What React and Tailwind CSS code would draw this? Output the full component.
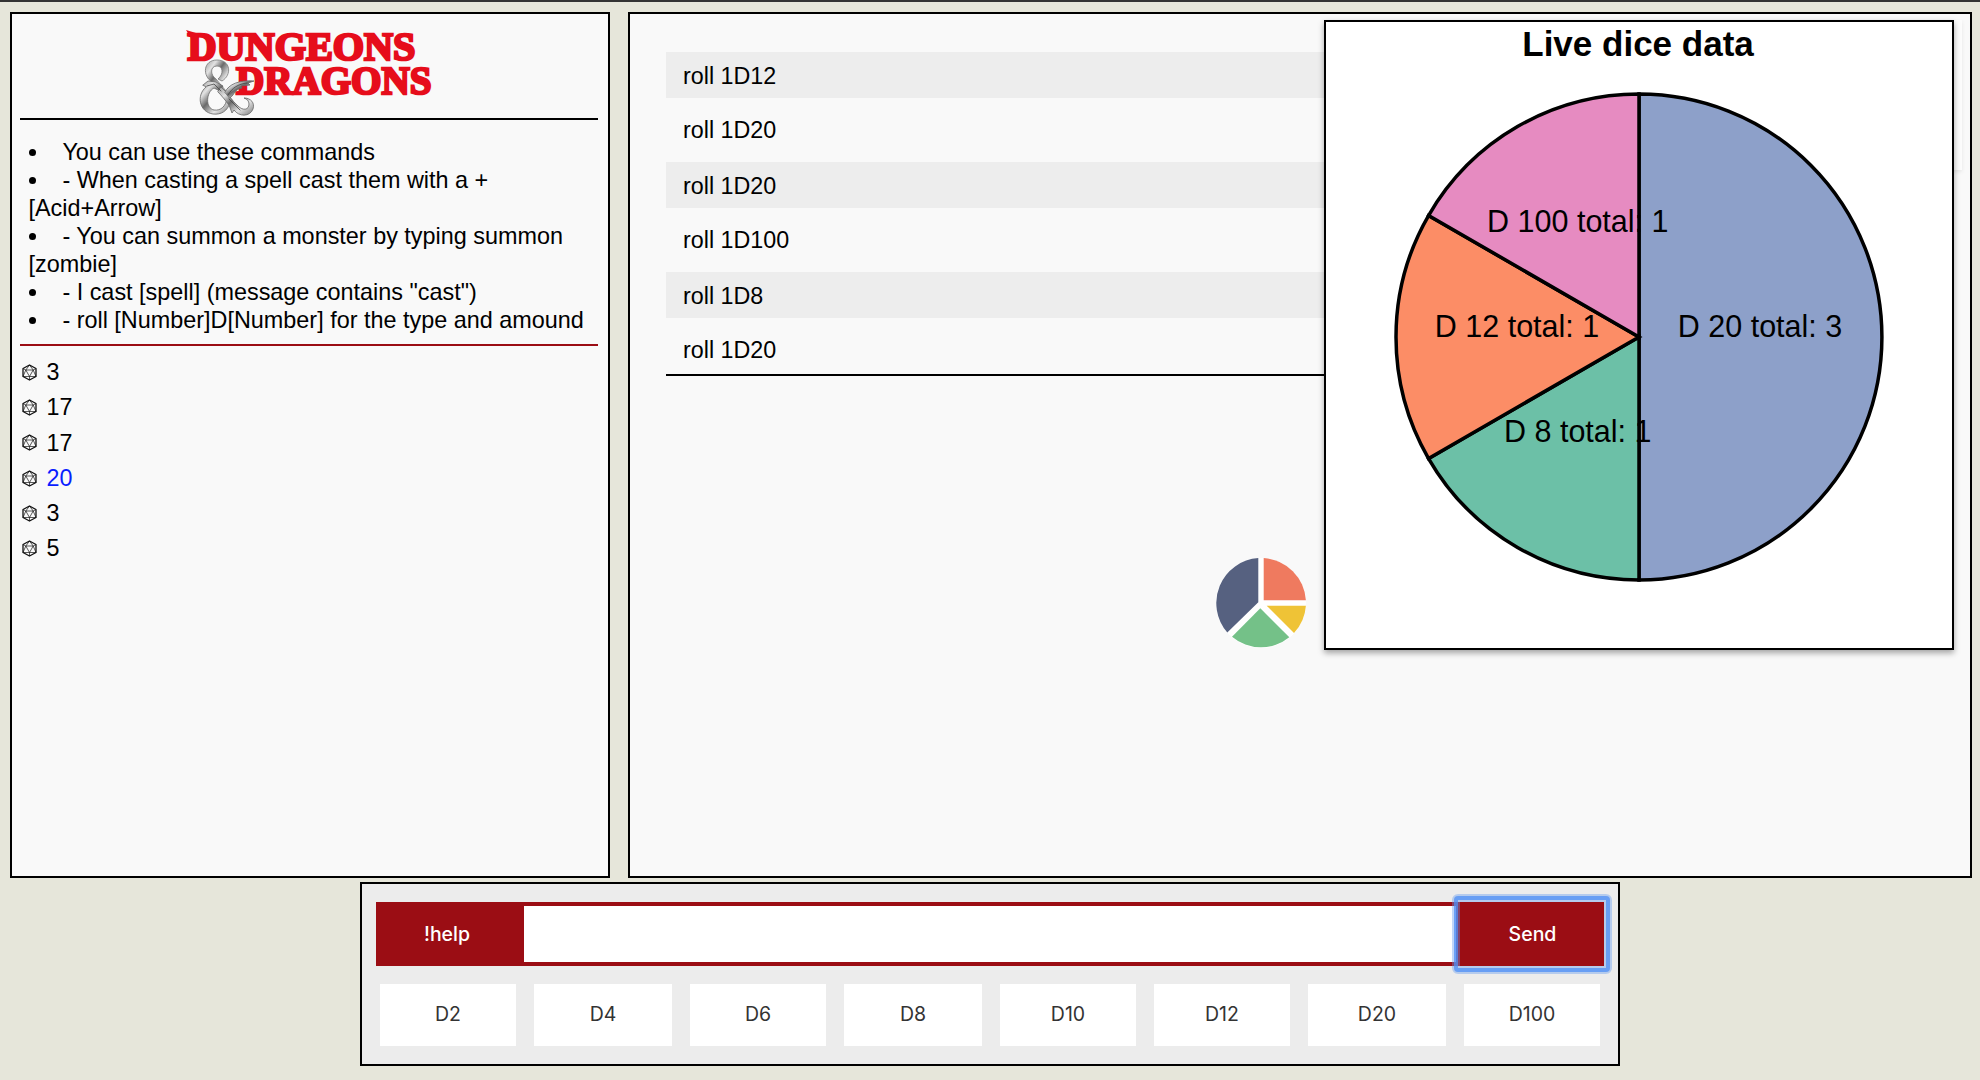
const commands = [
  'You can use these commands',
  '- When casting a spell cast them with a + [Acid+Arrow]',
  '- You can summon a monster by typing summon [zombie]',
  '- I cast [spell] (message contains "cast")',
  '- roll [Number]D[Number] for the type and amound',
]

const rolls = [
  { value: 3 },
  { value: 17 },
  { value: 17 },
  { value: 20, crit: true },
  { value: 3 },
  { value: 5 },
]

const messages = ['roll 1D12', 'roll 1D20', 'roll 1D20', 'roll 1D100', 'roll 1D8', 'roll 1D20']

const dice = ['D2', 'D4', 'D6', 'D8', 'D10', 'D12', 'D20', 'D100']

const slices = [
  { label: 'D 20 total: 3', from: 0, to: 180, color: '#8da0c9' },
  { label: 'D 8 total: 1', from: 180, to: 240, color: '#6cc0a7' },
  { label: 'D 12 total: 1', from: 240, to: 300, color: '#fc8d66' },
  { label: 'D 100 total: 1', from: 300, to: 360, color: '#e68bc1' },
]

const polar = (deg, r) => {
  const a = (deg * Math.PI) / 180
  return [Math.sin(a) * r, -Math.cos(a) * r]
}

function Logo() {
  return (
    <svg className="block shrink-0 overflow-visible" width="272" height="104" viewBox="174 14 272 104">
      <defs>
        <linearGradient id="silver" x1="0" y1="0" x2="1" y2="1">
          <stop offset="0" stopColor="#9a9a9a" />
          <stop offset="0.25" stopColor="#e2e2e2" />
          <stop offset="0.45" stopColor="#6a6a6a" />
          <stop offset="0.7" stopColor="#e4e4e4" />
          <stop offset="1" stopColor="#777" />
        </linearGradient>
      </defs>
      <g fill="#e60d1b" stroke="#e60d1b" strokeWidth="2.6" fontFamily="Liberation Serif, serif" fontWeight="700" fontSize="41">
        <text x="188.500" y="59.500" textLength="228" lengthAdjust="spacingAndGlyphs">DUNGEONS</text>
        <text x="237" y="93.500" textLength="195.500" lengthAdjust="spacingAndGlyphs">DRAGONS</text>
      </g>
      <path d="M187 30l10 3-4 7z" fill="#e60d1b" />
      <g strokeLinejoin="round" strokeLinecap="round">
        <path d="M213 82C203 76 204 60 218 60C232 60 233 75 223 81L219 79C225 74 224 66 218 66C211 66 211 75 217 79L227 91L222 92Z" fill="url(#silver)" stroke="#777" strokeWidth="0.8" />
        <path d="M204 85L209 81L217 82L224 86L221 91L215 88C207 92 206 108 215 110C222 111 227 106 228 98L231 102C229 111 222 115 214 114C200 112 197 95 207 87Z" fill="url(#silver)" stroke="#666" strokeWidth="0.8" />
        <path d="M222 87C229 93 233 101 239 106C244 111 250 110 250 104C250 101 248 99 245 98C252 98 256 103 254 109C251 117 240 117 235 110L233 113L230 105C226 100 223 96 219 92Z" fill="url(#silver)" stroke="#666" strokeWidth="0.8" />
        <path d="M226 92C230 84 240 80 255 81L249 83L251 85L242 86L243 88C236 89 236 94 231 98Z" fill="url(#silver)" stroke="#666" strokeWidth="0.8" />
        <path d="M208 86L215 84L222 91M229 95C233 88 239 84 248 83M230 99L241 110" fill="none" stroke="#444" strokeWidth="0.8" />
      </g>
    </svg>
  )
}

function D20Icon() {
  return (
    <svg className="block" width="15" height="17" viewBox="0 0 15 17" fill="none" stroke="#111" strokeLinejoin="round">
      <path d="M7.500 1L14 4.500v8L7.500 16L1 12.500v-8z" strokeWidth="1.3" />
      <path d="M7.500 1L3.800 6h7.400zM3.800 6L7.500 12.500L11.200 6M1 4.500L3.800 6L1 12.500L7.500 12.500L14 12.500L11.200 6L14 4.500M7.500 12.500V16" strokeWidth="0.7" />
    </svg>
  )
}

function ChartIcon() {
  return (
    <svg className="block" width="90" height="90" viewBox="0 0 90 90">
      <circle cx="45" cy="45" r="45" fill="#fff" />
      <path d="M42.300 0.100V44.300L11.300 74.500A45 45 0 0 1 42.300 0.100z" fill="#566180" />
      <path d="M47.700 0.100A45 45 0 0 1 89.900 42.300H47.700z" fill="#ef7a5f" />
      <path d="M50.700 47.700H89.900A45 45 0 0 1 78 75z" fill="#efc336" />
      <path d="M44.300 50.300L73.300 79.300A45 45 0 0 1 16 78.700z" fill="#74c188" />
    </svg>
  )
}

function DicePie() {
  return (
    <svg className="block" width="626" height="626" viewBox="-313 -315 626 626">
      {slices.map((s) => {
        const [x1, y1] = polar(s.from, 243)
        const [x2, y2] = polar(s.to, 243)
        return (
          <path key={s.label} d={`M0 0L${x1} ${y1}A243 243 0 0 1 ${x2} ${y2}Z`} fill={s.color} stroke="#000" strokeWidth="3.500" />
        )
      })}
      {slices.map((s) => {
        const [x, y] = polar((s.from + s.to) / 2, 121.5)
        return (
          <text key={s.label} x={x - 0.5} y={y} textAnchor="middle" fontSize="30.5">
            {s.label}
          </text>
        )
      })}
      <text x="-1" y="-281" textAnchor="middle" fontSize="35" fontWeight="700">
        Live dice data
      </text>
    </svg>
  )
}

export default function App() {
  return (
    <div className="flex h-[1080px] w-[1980px] flex-col overflow-hidden border-t-2 border-[#333] bg-[#e6e6da] font-['Liberation_Sans',Arial,sans-serif] text-[23.300px] text-black">
      <div className="mt-[10px] ml-[10px] flex h-[866px] gap-[18px]">
        <aside className="w-[600px] shrink-0 border-2 border-black bg-[#f9f9f9] pr-[10px] pl-2">
          <div className="flex h-[106px] justify-center border-b-2 border-black">
            <Logo />
          </div>
          <ul className="mt-[18px] -mr-[6px] list-inside list-disc pl-[8.500px] text-[23.400px] leading-7">
            {commands.map((c) => (
              <li key={c}>
                <span className="ml-[2.500px]">{c}</span>
              </li>
            ))}
          </ul>
          <ul className="mt-[10px] border-t-2 border-[#9b0d14] pt-[9px]">
            {rolls.map((r, i) => (
              <li key={i} className="flex h-[35.200px] items-center gap-[10px] pl-[1.500px]">
                <D20Icon />
                <span className={r.crit ? 'text-[#0a1eff]' : ''}>{r.value}</span>
              </li>
            ))}
          </ul>
        </aside>

        <main className="relative w-[1344px] shrink-0 border-2 border-black bg-[#f9f9f9]">
          <ul className="mt-[38px] ml-9 w-[1260px] border-b-2 border-black">
            {messages.map((m, i) => (
              <li key={i} className="h-[55px] last:h-[47px]">
                <div className={`flex h-[46px] items-center pl-[17px] ${i % 2 ? '' : 'bg-[#ededed] pt-[2px]'}`}>{m}</div>
              </li>
            ))}
          </ul>
          <div className="absolute top-[6px] right-[8px] h-[150px] w-[300px] bg-[#fcfcfc] shadow-[0_2px_4px_rgba(0,0,0,0.08)]" />
          <div className="absolute top-[6px] right-[16px] h-[630px] w-[630px] border-2 border-black bg-white shadow-[0_3px_6px_rgba(0,0,0,0.35)]">
            <DicePie />
          </div>
          <button className="absolute top-[544px] left-[586px]">
            <ChartIcon />
          </button>
        </main>
      </div>

      <footer className="mt-1 ml-[360px] h-[184px] w-[1260px] border-2 border-black bg-[#ececec] px-[14px] pt-[18px] font-['Inter',sans-serif] text-[19.500px]">
        <form className="flex h-16">
          <button type="button" className="w-[148px] bg-[#9b0d14] pt-[2px] pr-[6px] font-medium text-white">!help</button>
          <input className="min-w-0 flex-1 border-y-4 border-[#9b0d14] bg-white outline-none" />
          <button type="button" className="relative w-[148px] bg-[#9b0d14] pt-[2px] pl-[5px] font-medium text-white">
            Send
            <span className="absolute -inset-y-[8px] -right-[8px] -left-[4px] rounded-[6px] border-8 border-[#659cf0]/40" />
            <span className="absolute -inset-y-[6px] -right-[6px] -left-[2px] rounded-[4px] border-4 border-[#4f8ff5]/75" />
          </button>
        </form>
        <div className="mt-[18px] grid grid-cols-[136px_138px_136px_138px_136px_136px_138px_136px] gap-[18px] px-1">
          {dice.map((d) => (
            <button key={d} className="h-[62px] bg-white text-[#333]">{d}</button>
          ))}
        </div>
      </footer>
    </div>
  )
}
